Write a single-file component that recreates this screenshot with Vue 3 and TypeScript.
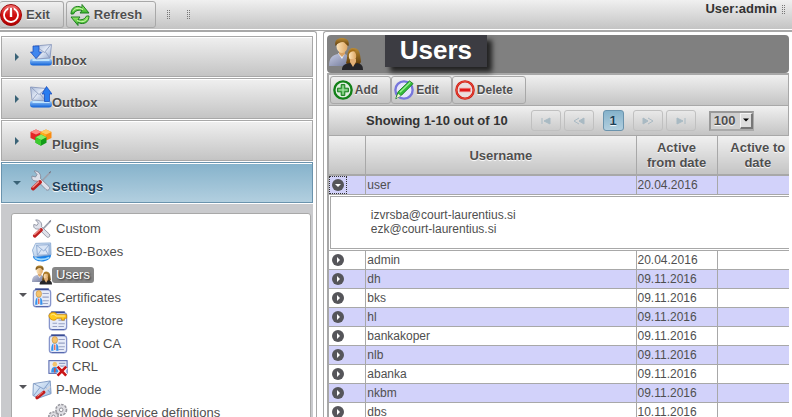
<script setup lang="ts">
import { ref } from 'vue'

interface Section { id: string; label: string; icon: string }
interface TreeNode { label: string; icon: string; depth: number; open?: boolean }
interface UserRow { name: string; from: string; boxes?: string[] }

const sections: Section[] = [
  { id: 'inbox', label: 'Inbox', icon: 'inbox' },
  { id: 'outbox', label: 'Outbox', icon: 'outbox' },
  { id: 'plugins', label: 'Plugins', icon: 'plugins' },
  { id: 'settings', label: 'Settings', icon: 'tools' },
]
const tree: TreeNode[] = [
  { label: 'Custom', icon: 'tools', depth: 0 },
  { label: 'SED-Boxes', icon: 'mail', depth: 0 },
  { label: 'Users', icon: 'users', depth: 0 },
  { label: 'Certificates', icon: 'cert', depth: 0, open: true },
  { label: 'Keystore', icon: 'key', depth: 1 },
  { label: 'Root CA', icon: 'cert', depth: 1 },
  { label: 'CRL', icon: 'crl', depth: 1 },
  { label: 'P-Mode', icon: 'pmode', depth: 0, open: true },
  { label: 'PMode service definitions', icon: 'gears', depth: 1 },
]
const actions = [
  { label: 'Add', icon: 'add' },
  { label: 'Edit', icon: 'edit' },
  { label: 'Delete', icon: 'delete' },
]
const users: UserRow[] = [
  { name: 'user', from: '20.04.2016', boxes: ['izvrsba@court-laurentius.si', 'ezk@court-laurentius.si'] },
  { name: 'admin', from: '20.04.2016' },
  { name: 'dh', from: '09.11.2016' },
  { name: 'bks', from: '09.11.2016' },
  { name: 'hl', from: '09.11.2016' },
  { name: 'bankakoper', from: '09.11.2016' },
  { name: 'nlb', from: '09.11.2016' },
  { name: 'abanka', from: '09.11.2016' },
  { name: 'nkbm', from: '09.11.2016' },
  { name: 'dbs', from: '10.11.2016' },
]
const active = ref('settings')
const selected = ref('Users')
const expanded = ref('user')
const pageSize = ref('100')
</script>

<template>
  <svg class="sprite" aria-hidden="true">
    <defs>
      <linearGradient id="g-blue" x1="0" y1="0" x2="0" y2="1"><stop offset="0" stop-color="#a9d3fb" /><stop offset="1" stop-color="#0b5fd8" /></linearGradient>
      <linearGradient id="g-env" x1="0" y1="0" x2="1" y2="1"><stop offset="0" stop-color="#a9b9d8" /><stop offset=".5" stop-color="#e3eaf6" /><stop offset="1" stop-color="#8fa4cc" /></linearGradient>
      <linearGradient id="g-pale" x1="0" y1="0" x2="1" y2="1"><stop offset="0" stop-color="#eaf3fc" /><stop offset="1" stop-color="#9dbce2" /></linearGradient>
      <linearGradient id="g-red" x1="0" y1="0" x2="0" y2="1"><stop offset="0" stop-color="#f47070" /><stop offset=".5" stop-color="#d21010" /><stop offset="1" stop-color="#b00000" /></linearGradient>
      <linearGradient id="g-green" x1="0" y1="0" x2="0" y2="1"><stop offset="0" stop-color="#a4f070" /><stop offset="1" stop-color="#2fae25" /></linearGradient>
      <linearGradient id="g-shirt" x1="0" y1="0" x2="1" y2="1"><stop offset="0" stop-color="#c6cbe2" /><stop offset="1" stop-color="#707898" /></linearGradient>
      <linearGradient id="g-hair" x1="0" y1="0" x2="0" y2="1"><stop offset="0" stop-color="#b98a35" /><stop offset="1" stop-color="#5d3a08" /></linearGradient>
      <linearGradient id="g-skin" x1="0" y1="0" x2="1" y2="0"><stop offset="0" stop-color="#fbe3ba" /><stop offset="1" stop-color="#dfa763" /></linearGradient>
    </defs>
    <symbol id="exit" viewBox="0 0 22 22">
      <circle cx="11" cy="11" r="10.5" fill="url(#g-red)" stroke="#9c0808" />
      <circle cx="11" cy="11" r="7" fill="none" stroke="#fff" stroke-width="1.8" />
      <path d="M11 3.500V13" stroke="#c81414" stroke-width="5" /><path d="M11 4v9" stroke="#fff" stroke-width="2.4" />
    </symbol>
    <symbol id="refresh" viewBox="0 0 20 22">
      <path d="M1 10C1 5 4 2 9 2.500l3 1V.5l7 8.500h-9l2-2.500C8 5.500 5 7 3.500 10z" fill="url(#g-green)" stroke="#1f7d22" />
      <path d="M19 12c0 5-3 8-8 7.500l-3-1v3L1 13h9l-2 2.500c4 1 7-.5 8.500-3.500z" fill="url(#g-green)" stroke="#1f7d22" />
      <path d="M3 7.500C5 4 8 3.500 13 5.500M17 14.500c-2 3.500-5 4-10 2" fill="none" stroke="#d2fbb4" />
    </symbol>
    <symbol id="inbox" viewBox="0 0 22 22">
      <rect x="0" y="14.500" width="22" height="7" rx="3" fill="url(#g-blue)" /><path d="M2.500 16h17" stroke="#bfe4ff" stroke-width="2" />
      <path d="M5 2 21.500 .5 20 14 6 15z" fill="url(#g-env)" stroke="#8091b8" stroke-width=".8" />
      <path d="m6 2.500 8.500 6L20.500 1M7 14l6-6.500M19.500 13.500l-4-5.500" fill="none" stroke="#8797ba" stroke-width=".8" />
      <path d="M3 2h6v6h2.500L6 14.500.5 8H3z" fill="#3f86ee" stroke="#1646b5" stroke-width=".7" />
    </symbol>
    <symbol id="outbox" viewBox="0 0 22 22">
      <rect x="0" y="14.500" width="22" height="7" rx="3" fill="url(#g-blue)" /><path d="M2.500 16h17" stroke="#bfe4ff" stroke-width="2" />
      <path d="M.5 1 16 2.500V15L2 14z" fill="url(#g-env)" stroke="#8091b8" stroke-width=".8" />
      <path d="m1.500 1.500 7.500 7L15.500 3M2.500 13.500l5-6M15 14l-5-6" fill="none" stroke="#8797ba" stroke-width=".8" />
      <path d="M16.500.5 22 8h-2.500v7.500h-5V8H12z" fill="#287cf0" stroke="#1646b5" stroke-width=".7" />
    </symbol>
    <symbol id="plugins" viewBox="0 0 22 22">
      <path d="m6 1.500 5.500 2.500v6L6 12.500.5 10V4z" fill="#e52626" /><path d="m6 1.500 5.500 2.500L6 6.500.5 4z" fill="#ff8b87" />
      <path d="m16 1.500 5.500 2.500v6L16 12.500 10.500 10V4z" fill="#f98b12" /><path d="m16 1.500 5.500 2.500L16 6.500 10.500 4z" fill="#ffcb62" /><path d="m10.500 4 5.500 2.500v6L10.500 10z" fill="#ffad19" />
      <path d="m11 6.500 5.500 2.700v5.500l-5.500 3-5.500-3V9.200z" fill="#129c18" /><path d="m11 6.500 5.500 2.700L11 12 5.500 9.200z" fill="#84ee67" /><path d="M5.500 9.200 11 12v5.700l-5.500-3z" fill="#3dcc2e" />
    </symbol>
    <symbol id="tools" viewBox="0 0 22 22">
      <path d="M20.500 2 10 13" stroke="#9da1ad" stroke-width="1.800" /><path d="m19 3 2-1.500" stroke="#6c7080" stroke-width="1" />
      <path d="M4 1 7 4.500 5.500 7 2 6C1 10 4 11.500 7.500 11L16 19.500c2 2 5-1 3-3L10.500 8.500C11.500 4 8 .5 4 1z" fill="#dfe1ea" stroke="#858999" stroke-width=".9" />
      <path d="m10 12-7 6.500" stroke="#bf2020" stroke-width="4" stroke-linecap="round" /><path d="m9 11.500-6.500 6" stroke="#f59b92" stroke-width="1.200" />
    </symbol>
    <symbol id="mail" viewBox="0 0 22 22">
      <path d="M1 16c2-3 17-4 20-2 0 9-18 10-20 2z" fill="#1b82e8" /><path d="M3 17c3 3 10 3 16 0" stroke="#9edaff" stroke-width="2" fill="none" />
      <path d="M4 1.500 20.500 1l.5 13-18.500 2.500L.500 9z" fill="url(#g-pale)" stroke="#7c9fcc" stroke-width=".8" />
      <path d="M5 3.500 19 3l-.5 11-12.500.5z" fill="#d9e5f6" stroke="#7f9dc9" stroke-width=".8" /><path d="m5 3.500 8 6.500 6-7M6.500 14l4-6M18 14l-3.500-6" stroke="#7f9dc9" stroke-width=".8" fill="none" />
    </symbol>
    <symbol id="users" viewBox="0 0 34 32">
      <path d="M0 28c0-8 3-11 9-12h7c4 2 5 6 5 12z" fill="url(#g-shirt)" /><path d="m9 15 4 6 3-6z" fill="#f6f6fa" />
      <path d="M10 12h6v4l-3 3-3-3z" fill="#d7a164" /><ellipse cx="13" cy="8.500" rx="5.500" ry="6.500" fill="url(#g-skin)" />
      <path d="M6.500 8C5 2 9 0 13 0s8 2 6.500 8C17 7 16 4 14 4 11 4 9 5 6.500 8z" fill="url(#g-hair)" />
      <path d="M17 25c2-4 0-15 7-15s7 6 8 14l-2 3H19z" fill="url(#g-hair)" /><path d="M13 32c0-5 3-6 8-7l3 2 4-2c5 1 6 3 6 7z" fill="#252529" />
      <ellipse cx="23.500" cy="18" rx="3.700" ry="5" fill="url(#g-skin)" /><path d="m21 24 3 5 3-5v-3h-6z" fill="#e2b077" /><path d="M19 18c1-4 4-5 8-5-3-3-8-1-8 5z" fill="#a66e18" />
    </symbol>
    <symbol id="sheet" viewBox="0 0 22 22">
      <rect x="1.500" y="2" width="19" height="18.500" rx="3" fill="#e6ebf8" stroke="#8795cb" stroke-width="1.400" />
      <path d="M3.500 1.200h15" stroke="#1b2f80" stroke-width="1.500" /><path d="M4 20.500h14" stroke="#5667ad" stroke-width="1.300" />
      <path d="M11.500 6h7M11.500 10h7M11.500 14h7M11.500 17h6" stroke="#98a2c4" stroke-width="1.200" />
    </symbol>
    <symbol id="cert" viewBox="0 0 22 22">
      <use href="#sheet" width="22" height="22" />
      <path d="M3.500 18.500c0-6 1-8 4-8s4 2 4 8z" fill="#3793ed" /><ellipse cx="7.500" cy="6.500" rx="3" ry="3.700" fill="#f5c36d" stroke="#c38a36" stroke-width=".6" /><path d="M7.500 11v7.500" stroke="#fff" stroke-width="3" /><path d="M7.500 11.500v6" stroke="#e04a30" stroke-width="1.300" />
    </symbol>
    <symbol id="key" viewBox="0 0 22 22">
      <use href="#sheet" width="22" height="22" />
      <path d="M5 13.500h5M5 17h5" stroke="#98a2c4" stroke-width="1.200" />
      <path d="M1 5c1-4 7-5 9-1h10.500v4H18v2h-3V8h-5c-2 4-9 2-9-3z" fill="#ffc91c" stroke="#c98609" stroke-width=".9" /><path d="M3.500 4.500c2-1.500 4-1 5 1h10" stroke="#fff0a0" stroke-width="1" fill="none" />
    </symbol>
    <symbol id="crl" viewBox="0 0 22 22">
      <rect x="1" y="4" width="20" height="14" fill="#e6ebf8" stroke="#5a6bb0" stroke-width="1.200" />
      <path d="M12 7h7M12 10h7" stroke="#98a2c4" stroke-width="1.200" />
      <path d="M3.500 17c0-4 1-6 4-6s4 2 4 6z" fill="#3793ed" /><ellipse cx="7.500" cy="8" rx="2.500" ry="2.800" fill="#f5c36d" /><path d="M7.500 12v5" stroke="#e04a30" stroke-width="1.400" />
      <path d="m11 11 9 9m0-9-9 9" stroke="#fff" stroke-width="4.500" /><path d="m10.500 10.500 9.500 10m0-10-9.500 10" stroke="#c91518" stroke-width="2.900" />
    </symbol>
    <symbol id="pmode" viewBox="0 0 22 22">
      <path d="M1.500 4 20 1l1 14-14 5-6-3z" fill="url(#g-pale)" stroke="#6f8dbb" stroke-width=".9" /><path d="m2 4 11 6 7-9M2 17l7-9M20 14l-5-6" stroke="#6f8dbb" stroke-width=".8" fill="none" />
      <path d="m20 7-8 7" stroke="#d7d7dd" stroke-width="2" /><path d="m13 13.500-7.500 6" stroke="#c21c1c" stroke-width="3.600" stroke-linecap="round" /><path d="m12 13-6 5" stroke="#f79b92" />
    </symbol>
    <symbol id="gears" viewBox="0 0 22 22">
      <circle cx="14.500" cy="7.500" r="5.500" fill="#e5e5e9" stroke="#98989f" stroke-width="2.500" stroke-dasharray="2.600 1" /><circle cx="14.500" cy="7.500" r="5" fill="#dedee3" /><circle cx="14.500" cy="7.500" r="2" fill="#fff" stroke="#85858d" />
      <circle cx="6" cy="15" r="4.700" fill="#e5e5e9" stroke="#98989f" stroke-width="2.500" stroke-dasharray="2.400 1" /><circle cx="6" cy="15" r="4.200" fill="#dedee3" /><circle cx="6" cy="15" r="1.700" fill="#fff" stroke="#85858d" />
    </symbol>
    <symbol id="add" viewBox="0 0 22 22">
      <circle cx="11" cy="11" r="9.500" fill="#e0eee0" stroke="#128018" stroke-width="2.600" />
      <path d="M9 5h4v4h4v4h-4v4H9v-4H5V9h4z" fill="#48b04a" stroke="#147a1a" /><path d="M11 6v10M6 11h10" stroke="#b3e8b3" stroke-width="1.200" />
    </symbol>
    <symbol id="edit" viewBox="0 0 22 22">
      <circle cx="11" cy="11" r="9.500" fill="#e6e6fa" stroke="#7777dc" stroke-width="2.600" />
      <path d="m2 20.500 2.500-7.500L17 1l4 3L8.500 16.500z" fill="#35bd3a" stroke="#177b20" /><path d="M6.500 13.500 18 2.500" stroke="#9cf090" stroke-width="1.500" /><path d="m2.500 20 2-5 3 2.500z" fill="#f4efd8" />
    </symbol>
    <symbol id="delete" viewBox="0 0 22 22">
      <circle cx="11" cy="11" r="9.500" fill="#eadede" stroke="#cf1c12" stroke-width="2.600" /><circle cx="11" cy="11" r="9.500" fill="none" stroke="#f06050" stroke-width=".7" />
      <rect x="5" y="9" width="12" height="4" fill="#e01818" stroke="#f28c8c" stroke-width=".8" />
    </symbol>
    <symbol id="right" viewBox="0 0 8 8"><path d="M2 0v8l4-4z" fill="currentColor" /></symbol>
    <symbol id="down" viewBox="0 0 8 8"><path d="M0 2h8L4 6z" fill="currentColor" /></symbol>
  </svg>

  <div class="page">
    <header class="topbar">
      <button class="btn exit"><svg class="i22"><use href="#exit" /></svg>Exit</button>
      <button class="btn"><svg class="i20"><use href="#refresh" /></svg>Refresh</button>
      <span class="grip first"></span><span class="grip"></span>
      <span class="who">User:admin</span><span class="grip end"></span>
    </header>

    <div class="body">
      <nav class="side">
        <button v-for="s in sections" :key="s.id" class="section" :class="{ on: active === s.id }" @click="active = s.id">
          <svg class="arrow"><use :href="active === s.id ? '#down' : '#right'" /></svg>
          <span class="caption"><svg class="i22"><use :href="'#' + s.icon" /></svg>{{ s.label }}</span>
        </button>
        <div class="well">
          <ul class="tree">
            <li v-for="n in tree" :key="n.label" :class="{ child: n.depth === 1 }">
              <span class="toggle"><svg v-if="n.open" class="arrow"><use href="#down" /></svg></span>
              <svg class="i20"><use :href="'#' + n.icon" /></svg>
              <a href="#" :class="{ on: selected === n.label }" @click.prevent="selected = n.label">{{ n.label }}</a>
            </li>
          </ul>
        </div>
      </nav>

      <main class="main">
        <div class="title">
          <svg class="portrait"><use href="#users" /></svg>
          <h1>Users</h1>
        </div>
        <div class="grid">
          <div class="tools">
            <button v-for="a in actions" :key="a.label" class="btn"><svg class="i20"><use :href="'#' + a.icon" /></svg>{{ a.label }}</button>
          </div>
          <div class="pager">
            <span class="count">Showing 1-10 out of 10</span>
            <button class="nav" disabled aria-label="First page"><svg viewBox="0 0 12 8"><path d="M2 1v6M10 1v6L4 4z" /></svg></button>
            <button class="nav" disabled aria-label="Previous page"><svg viewBox="0 0 12 8"><path d="M6 1 1 4l5 3" class="line" /><path d="M11 1v6L6 4z" /></svg></button>
            <button class="nav current">1</button>
            <button class="nav" disabled aria-label="Next page"><svg viewBox="0 0 12 8"><path d="m6 1 5 3-5 3" class="line" /><path d="M1 1v6l5-3z" /></svg></button>
            <button class="nav" disabled aria-label="Last page"><svg viewBox="0 0 12 8"><path d="M10 1v6M2 1v6l6-3z" /></svg></button>
            <span class="size">
              <select v-model="pageSize" aria-label="Rows per page"><option>100</option></select>
              <span class="drop"><svg class="arrow"><use href="#down" /></svg></span>
            </span>
          </div>
          <table>
            <colgroup><col class="c-toggle" /><col /><col class="c-date" /><col class="c-date" /></colgroup>
            <thead><tr><th></th><th>Username</th><th>Active from date</th><th>Active to date</th></tr></thead>
            <tbody>
              <template v-for="(u, i) in users" :key="u.name">
                <tr :class="{ odd: i % 2 === 0 }">
                  <td>
                    <button class="expander" :class="{ focus: expanded === u.name }" :aria-label="'Details of ' + u.name" @click="expanded = expanded === u.name ? '' : u.name">
                      <svg viewBox="0 0 12 12"><circle cx="6" cy="6" r="6" fill="#55555a" /><path :d="expanded === u.name ? 'M3 5h6L6 8z' : 'M5 3v6l3-3z'" fill="#fff" /></svg>
                    </button>
                  </td>
                  <td>{{ u.name }}</td><td>{{ u.from }}</td><td></td>
                </tr>
                <tr v-if="u.boxes && expanded === u.name" class="detail">
                  <td colspan="4"><div class="boxes"><div v-for="b in u.boxes" :key="b">{{ b }}</div></div></td>
                </tr>
              </template>
            </tbody>
          </table>
        </div>
      </main>
    </div>
  </div>
</template>

<style>
body { overflow: hidden; background: #fff; }
</style>

<style scoped>
* { box-sizing: border-box; }
.sprite { position: absolute; width: 0; height: 0; }
.page { display: flex; flex-direction: column; height: 100vh; color: #4f4f4f; font: 13px/16px "Liberation Sans", Arial, sans-serif; }
button, select { font: bold 13px/16px "Liberation Sans", Arial, sans-serif; color: #4f4f4f; text-shadow: 0 1px 1px #fff; }
svg { display: block; flex: none; }
.i22 { width: 22px; height: 22px; }
.i20 { width: 20px; height: 22px; }
.arrow { width: 8px; height: 8px; }

.topbar { display: flex; flex: none; align-items: center; height: 31px; padding: 1px 0 2px; background: linear-gradient(#f0f0f0, #c4c4c4 29px, #fff 29px); border-bottom: 1px solid #a8a8a8; }
.btn { display: flex; align-items: center; gap: 2px; height: 28px; padding: 0 12px 0 2px; border: 1px solid #a8a8a8; border-radius: 3px; background: linear-gradient(#f0f0f0, #c4c4c4); }
.topbar .btn { gap: 4px; height: 27px; padding: 0 13px 0 3px; margin-right: 2px; }
.topbar .exit { padding-left: 0; border-left: 0; }
.grip { width: 3px; height: 10px; margin-right: 17px; background: radial-gradient(circle at 0 0, #777 1px, transparent 1px) 0 0 / 2px 2px; }
.grip.first { margin-left: 9px; }
.grip.end { margin: -10px 7px 0 5px; }
.who { margin-left: auto; margin-bottom: 11px; font-weight: bold; color: #333; }

.body { display: flex; flex: 1; min-height: 0; gap: 6px; }
.side { display: flex; flex: 0 0 40%; flex-direction: column; gap: 1px; padding: 4px 3px 0 1px; border: solid #a8a8a8; border-width: 1px 1px 0 0; border-top-right-radius: 3px; overflow: hidden; }
.section { display: flex; flex: none; align-items: center; gap: 9px; height: 41px; padding: 0 11px; border: 1px solid #a8a8a8; background: linear-gradient(#f0f0f0, #c4c4c4); box-shadow: inset 0 1px #fff; }
.section .arrow { color: #3a6377; }
.caption { display: flex; align-items: flex-end; height: 25px; }
.caption .i22 { margin-bottom: 3px; }
.section.on { color: #1d4058; border-color: #6a93ad; background: linear-gradient(#85b2cb, #b2cfdf); box-shadow: inset 0 1px #fff; }
.well { flex: 1; min-height: 0; padding: 9px 2px 0 10px; background: #c9cacd; }
.tree { height: 400px; margin: 0; padding: 3px 5px; list-style: none; background: #fff; border: 1px solid #a8a8a8; border-radius: 3px; }
.tree li { display: flex; align-items: center; height: 23px; }
.tree li.child { padding-left: 16px; }
.toggle { width: 15px; height: 16px; color: #55555a; }
.tree .toggle .arrow { margin: 1px 2px; }
.tree a { padding: 0 4px; border-radius: 3px; color: #4f4f4f; text-decoration: none; }
.tree a.on { color: #fff; background: #868686; text-shadow: 1px 1px 2px #222; }

.main { flex: 1; min-width: 0; padding: 3px 3px 0; border: solid #a8a8a8; border-width: 1px 0 0 1px; border-top-left-radius: 3px; overflow: hidden; }
.title { display: flex; align-items: flex-start; gap: 22px; height: 38px; padding-left: 2px; background: #808080; border-radius: 4px; }
.portrait { width: 34px; height: 32px; margin-top: 3px; }
h1 { margin: 0; padding: 0 15px; font-size: 26px; line-height: 30px; border-bottom: 2px solid #3c3c42; color: #fff; background: #3c3c42; box-shadow: 5px 5px 5px #222; }
.grid { border-left: 2px solid #a8a8a8; overflow: hidden; }
.tools, .pager { display: flex; align-items: center; background: linear-gradient(#f0f0f0, #c4c4c4); border: solid #a8a8a8; border-width: 1px 1px 1px 0; }
.tools { height: 33px; padding-left: 1px; border-top-width: 2px; }
.tools .btn { font-size: 12px; }
.pager { justify-content: center; gap: 3px; height: 30px; padding-left: 3px; border-top: 0; }
.count { margin-right: 20px; font-weight: bold; color: #333; }
.nav { display: grid; place-items: center; width: 30px; height: 21px; padding: 0; border: 1px solid #c0c0c0; border-radius: 3px; background: none; }
.nav svg { width: 12px; height: 8px; fill: #a9bac3; stroke: #a9bac3; }
.nav .line { fill: none; }
.nav.current { width: 21px; margin: 0 6px; color: #1d4058; border-color: #6a93ad; background: linear-gradient(#85b2cb, #b2cfdf); }
.size { position: relative; margin-left: 10px; }
select { display: block; width: 45px; height: 20px; padding: 0 3px; border: 2px solid; border-color: #999 #aaa #aaa #999; border-radius: 0; appearance: none; background: #cfcfcf; }
.drop { position: absolute; top: 2px; right: 1px; display: grid; place-items: center; width: 13px; height: 16px; color: #000; background: #ddd; border: solid; border-width: 1px 2px 2px 1px; border-color: #f4f4f4 #777 #777 #f4f4f4; pointer-events: none; }
.drop .arrow { width: 6px; height: 6px; }

table { width: calc(100% + 9px); table-layout: fixed; border-collapse: collapse; font-size: 12px; line-height: 14px; }
.c-toggle { width: 37px; }
.c-date { width: 81px; }
th { height: 39px; padding: 0 8px; font-size: 13px; line-height: 15px; text-shadow: 0 1px 1px #fff; background: linear-gradient(#f0f0f0, #c4c4c4); border: solid #a8a8a8; border-width: 0 0 2px 1px; }
td { height: 19px; padding: 0 1px; border: solid #a8a8a8; border-width: 1px 0 1px 1px; }
th:first-child, td:first-child { border-left: 0; padding: 0; }
.odd { background: #d2d2fa; }
.expander { display: grid; place-items: center; width: 18px; height: 18px; padding: 0; border: 1px dotted transparent; background: none; }
.expander.focus { border-color: #333; }
.expander svg { width: 12px; height: 12px; }
.detail td { padding: 1px; }
.boxes { height: 53px; padding: 11px 40px; border: 1px solid #a8a8a8; }
</style>
